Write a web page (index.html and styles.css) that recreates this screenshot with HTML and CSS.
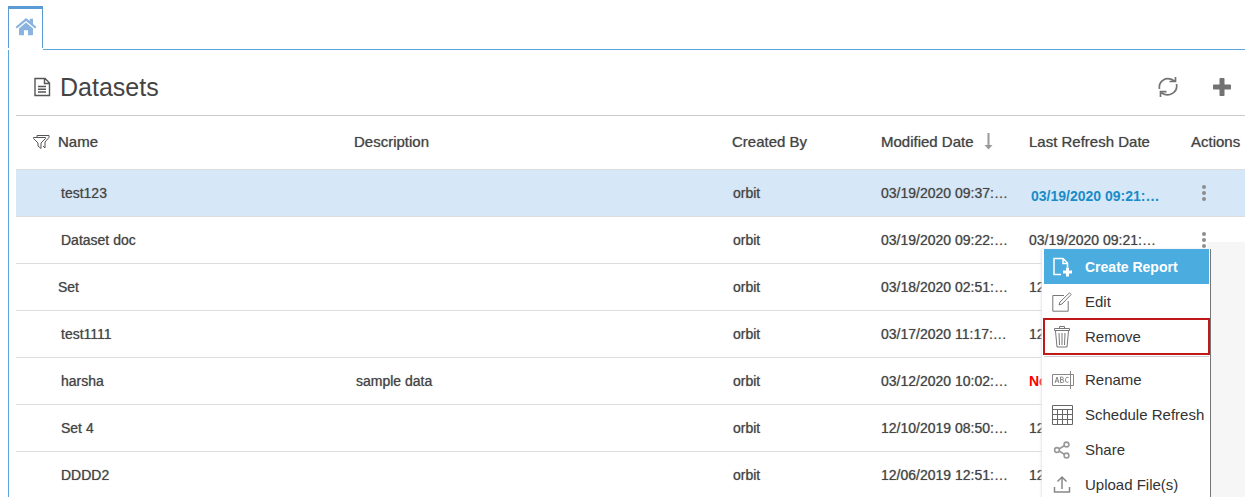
FILE: index.html
```html
<!DOCTYPE html>
<html lang="en">
<head>
<meta charset="utf-8">
<title>Datasets</title>
<link rel="stylesheet" href="styles.css">
</head>
<body>
<nav class="tabs">
  <a class="tab" href="#" aria-label="Home">
    <svg width="22" height="18" viewBox="0 0 22 18" fill="#8bb3df"><path d="M11 4.500l7 6v6q0 .8-.8.8H13v-5H9v5H4.800q-.8 0-.8-.8v-6z"/><path d="M11 0l3.800 3V.8h3.200V6L21.500 9l-1.400 1.500L11 3 1.900 10.500.5 9z"/></svg>
  </a>
  <span class="tab-line"></span>
</nav>
<main class="panel">
  <header class="title-bar">
    <svg width="17" height="20" viewBox="0 0 17 20" fill="none" stroke="#555" stroke-width="1.400"><path d="M1 1.500h10l4.500 4.500v12.500H1zM10.500 1.500v5h5M4 9.500h8M4 12.200h8M4 15h8"/></svg>
    <h1>Datasets</h1>
    <button class="icon-button" aria-label="Refresh"><svg width="20" height="22" viewBox="0 0 20 22" fill="none" stroke="#737373" stroke-width="1.700"><path d="M1.500 13C.3 5 8 -.5 16.500 5M11.500 5.500h6V1M18.500 8c1.500 8-7 14-15 9M8.500 15.700H2.500v5.300"/></svg></button>
    <button class="icon-button" aria-label="Add"><svg width="18" height="18" viewBox="0 0 18 18" fill="#737373"><path d="M7.300 0h3.400q.8 0 .8.800V6.500h5.700q.8 0 .8.800v3.400q0 .8-.8.800h-5.700v5.700q0 .8-.8.800H7.300q-.8 0-.8-.8v-5.700H.8q-.8 0-.8-.8V7.300q0-.8.8-.8h5.700V.8Q6.500 0 7.300 0z"/></svg></button>
  </header>
  <table>
    <colgroup><col class="c-name"><col class="c-desc"><col class="c-by"><col class="c-mod"><col class="c-ref"><col class="c-act"></colgroup>
    <thead><tr>
      <th><span class="name-head"><svg width="17" height="14" viewBox="0 0 17 14" fill="none" stroke="#555"><path d="M4 2.500V.5h12v2L12 7v6l-2-2M.5 2.500h12v1L8 8v5.500L5 11V8L.5 3.500z"/></svg>Name</span></th>
      <th>Description</th><th>Created By</th>
      <th><span class="sort-head">Modified Date<svg width="9" height="17" viewBox="0 0 9 17" fill="#999"><path d="M3.500 0h2v12h3l-4 4.500-4-4.500h3z"/></svg></span></th>
      <th>Last Refresh Date</th><th>Actions</th>
    </tr></thead>
    <tbody>
      <tr class="selected"><td>test123</td><td></td><td>orbit</td><td>03/19/2020 09:37:…</td><td class="running">03/19/2020 09:21:…</td><td><button class="dots" aria-label="Actions"><i></i><i></i><i></i></button></td></tr>
      <tr><td>Dataset doc</td><td></td><td>orbit</td><td>03/19/2020 09:22:…</td><td>03/19/2020 09:21:…</td><td><button class="dots" aria-label="Actions"><i></i><i></i><i></i></button></td></tr>
      <tr><td class="outdent">Set</td><td></td><td>orbit</td><td>03/18/2020 02:51:…</td><td>12</td><td></td></tr>
      <tr><td>test1111</td><td></td><td>orbit</td><td>03/17/2020 11:17:…</td><td>12</td><td></td></tr>
      <tr><td>harsha</td><td>sample data</td><td>orbit</td><td>03/12/2020 10:02:…</td><td class="never">No</td><td></td></tr>
      <tr><td>Set 4</td><td></td><td>orbit</td><td>12/10/2019 08:50:…</td><td>12</td><td></td></tr>
      <tr><td>DDDD2</td><td></td><td>orbit</td><td>12/06/2019 12:51:…</td><td>12</td><td></td></tr>
    </tbody>
  </table>
  <div class="backdrop"></div>
  <div class="menu">
    <button class="item active"><svg width="22" height="20" viewBox="0 0 22 20" fill="none" stroke="#fff" stroke-width="1.500"><path d="M9 17.500H2V1.500h9l4.500 4.500v4M11 1.500v5h4.500"/><path d="M15.500 10.500v9M11 15h9" stroke-width="3"/></svg>Create Report</button>
    <button class="item"><svg width="22" height="20" viewBox="0 0 22 20" fill="none" stroke="#777"><path d="M12 3.500H.8v15.700h15.400V9M7 13l1-3L17.500 .8l1.700 1.700L10 12z"/></svg>Edit</button>
    <button class="item remove"><svg width="22" height="22" viewBox="0 0 22 22" fill="none" stroke="#777"><path d="M2.500 4.500h15v-2h-15zM7.500 2.500v-2h5v2M3.500 5l1.500 16h10l1.500-16M7 7l.5 12M10 7v12M13 7l-.5 12"/></svg>Remove</button>
    <hr>
    <button class="item"><svg width="22" height="20" viewBox="0 0 22 20" fill="none" stroke="#888"><path d="M.5 4.500h21v11H.5zM18.500 1v18"/><path d="M3 13l2-6 2 6M4 11h2M8.500 7v5.500h2q1.300 0 1.300-1.300T10.500 9.700h-2 1.500q1.300 0 1.300-1.300T10 7zM16.500 7.500q-3-1-3 2.300t3 2.200"/></svg>Rename</button>
    <button class="item"><svg width="22" height="22" viewBox="0 0 22 22" fill="none" stroke="#666"><path d="M.5 1.500h20v19H.5zM.5 5.500h20M.5 10.500h20M.5 15.500h20M5.500 5.500v15M10.500 5.500v15M15.500 5.500v15"/></svg>Schedule Refresh</button>
    <button class="item"><svg width="22" height="20" viewBox="0 0 22 20" fill="none" stroke="#999" stroke-width="1.600"><circle cx="5" cy="10" r="2.400"/><circle cx="14.500" cy="4.500" r="2.400"/><circle cx="14.500" cy="15.500" r="2.400"/><path d="M7 9l5.300-3.200M7 11l5.300 3.200"/></svg>Share</button>
    <button class="item"><svg width="22" height="20" viewBox="0 0 22 20" fill="none" stroke="#888" stroke-width="1.500"><path d="M2.500 12v5h15v-5M10 14V2M5.500 6.500L10 2l4.500 4.500"/></svg>Upload File(s)</button>
  </div>
</main>
</body>
</html>
```
FILE: styles.css
```css
* { box-sizing: border-box; }
body {
  margin: 0;
  height: 100vh;
  display: flex;
  flex-direction: column;
  padding: 6px 0 0 8px;
  overflow: hidden;
  background: #fff;
  color: #444;
  font-family: "Liberation Sans", Arial, sans-serif;
}
button { border: 0; padding: 0; background: none; font: inherit; color: inherit; }
svg { flex: none; display: block; }
.tabs { display: flex; height: 44px; flex: none; }
.tab {
  width: 35px;
  height: 42px;
  padding: 9px 0 0 6px;
  border: 1px solid #5b9bd5;
  border-top-width: 3px;
  border-bottom: 0;
}
.tab-line { flex: 1; border-bottom: 1px solid #5ba7dc; }
.panel { position: relative; flex: 1; border-left: 1px solid #5ba7dc; padding-left: 7px; }
.title-bar {
  display: flex;
  align-items: center;
  height: 66px;
  padding: 8px 14px 0 18px;
  border-bottom: 1px solid #ccc;
}
h1 { flex: 1; margin: 0 0 0 9px; font-size: 25px; font-weight: 400; line-height: 30px; }
.icon-button { margin-left: 35px; }
table { width: 100%; table-layout: fixed; border-collapse: separate; border-spacing: 0; }
.c-name { width: 338px; }
.c-by { width: 149px; }
.c-mod { width: 148px; }
.c-ref { width: 162px; }
.c-act { width: 54px; }
th, td {
  padding: 0;
  text-align: left;
  font-weight: 400;
  white-space: nowrap;
  border-bottom: 1px solid #ddd;
  text-shadow: 0 0 1px #888;
}
th { height: 54px; padding-bottom: 2px; font-size: 15px; }
td { height: 47px; font-size: 14px; }
td:nth-child(1) { padding-left: 45px; }
td:nth-child(2) { padding-left: 2px; }
td:nth-child(3) { padding-left: 1px; }
td.outdent { padding-left: 42px; }
.name-head, .sort-head { display: flex; align-items: center; gap: 10px; }
.name-head { padding-left: 17px; gap: 8px; }
.selected { background: #d6e7f7; }
td.running { padding: 6px 0 0 2px; color: #1a8cc7; font-weight: 700; text-shadow: none; }
td.never { color: #f00; font-weight: 700; text-shadow: none; }
.dots { display: flex; flex-direction: column; gap: 2px; margin-left: 11px; }
.dots i { width: 4px; height: 4px; border-radius: 2px; background: #8d8d8d; }
.backdrop {
  position: absolute;
  top: 192px;
  right: 0;
  bottom: 0;
  width: 38px;
  background: #f6f6f6;
}
.menu {
  position: absolute;
  top: 199px;
  right: 34px;
  bottom: 0;
  width: 169px;
  padding: 0 1px 0 2px;
  border-right: 1px solid #777;
  background: #fff;
  box-shadow: -1px 0 2px #e4e4ec;
}
.item {
  display: flex;
  align-items: center;
  gap: 11px;
  width: 100%;
  height: 35px;
  padding-left: 8px;
  color: #333;
  font-size: 15px;
  white-space: nowrap;
}
.item.active { background: #4aacdf; color: #fff; font-size: 14px; font-weight: 700; }
.item.remove { width: auto; min-width: 100%; outline: 2px solid #c01818; outline-offset: -1px; }
hr { margin: 2px 0 5px; border: 0; border-top: 1px solid #ccc; }
```
